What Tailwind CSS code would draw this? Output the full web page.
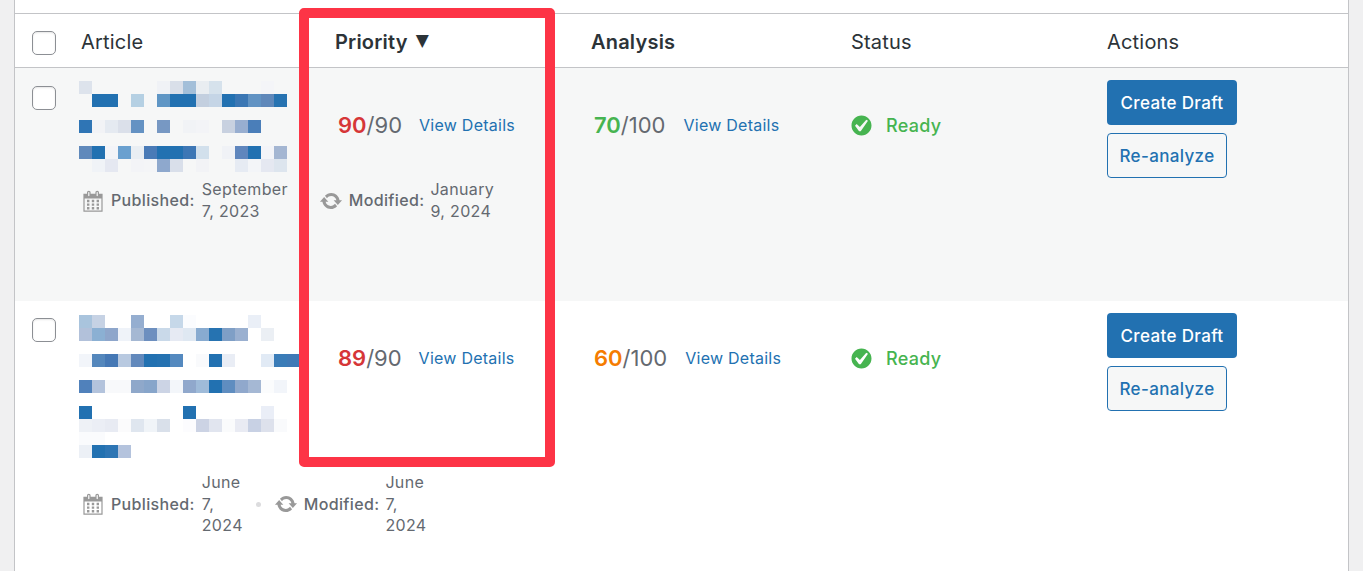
<!DOCTYPE html>
<html>
<head>
    <title>Content Refresh</title>
    <script src="https://cdn.jsdelivr.net/npm/@tailwindcss/browser@4"></script>
</head>
<body class="bg-[#f0f0f1] font-['Inter',sans-serif] text-[#2c3338]">
    <div class="relative h-[571px] overflow-hidden px-[14px]">
        <div class="h-full border-x border-[#c3c4c7] bg-white">
            <div class="h-[13px]"></div>

            <!-- Table header -->
            <div class="grid h-[55px] grid-cols-[51px_254px_256px_260px_256px_1fr] items-center border-y border-[#c3c4c7] pt-[2px] text-[20px] tracking-[0.2px]">
                <div class="pl-[17px] pt-[2px]">
                    <div class="h-[24px] w-[24px] rounded-[5px] border border-[#8c8f94] bg-white shadow-[inset_0_1px_2px_rgba(0,0,0,0.1)]"></div>
                </div>
                <div class="pl-[15px]">Article</div>
                <div class="flex items-center pl-[15px] font-semibold">Priority <span class="ml-[8px] -mt-[2px] font-['DejaVu_Sans',sans-serif] text-[17px]">▼</span></div>
                <div class="pl-[15px] font-semibold">Analysis</div>
                <div class="pl-[15px]">Status</div>
                <div class="pl-[15px]">Actions</div>
            </div>

            <!-- Row 1 -->
            <div class="grid h-[233px] grid-cols-[51px_254px_256px_260px_256px_1fr] bg-[#f6f7f7]">
                <div class="pl-[17px] pt-[18px]">
                    <div class="h-[24px] w-[24px] rounded-[5px] border border-[#8c8f94] bg-white shadow-[inset_0_1px_2px_rgba(0,0,0,0.1)]"></div>
                </div>
                <div class="min-w-0 pl-[15px] pt-[13px]">
                    <svg class="-ml-[2px] block" width="208" height="91" viewBox="0 0 208 91" shape-rendering="crispEdges">
                        <rect x="0" y="0" width="13" height="13" fill="#dde3ec"/><rect x="78" y="0" width="13" height="13" fill="#f0f2f6"/><rect x="91" y="0" width="13" height="13" fill="#d9dfe9"/><rect x="104" y="0" width="13" height="13" fill="#a3bfd9"/><rect x="117" y="0" width="13" height="13" fill="#e9edf1"/><rect x="130" y="0" width="13" height="13" fill="#d6e2ec"/><rect x="182" y="0" width="13" height="13" fill="#f4f5f8"/>
                        <rect x="13" y="13" width="26" height="13" fill="#2271b1"/><rect x="52" y="13" width="13" height="13" fill="#b5d0e3"/><rect x="78" y="13" width="13" height="13" fill="#5f96c5"/><rect x="91" y="13" width="26" height="13" fill="#2271b1"/><rect x="117" y="13" width="13" height="13" fill="#c3cfdf"/><rect x="130" y="13" width="13" height="13" fill="#c5d5e6"/><rect x="143" y="13" width="13" height="13" fill="#2271b1"/><rect x="156" y="13" width="13" height="13" fill="#3b77b4"/><rect x="169" y="13" width="13" height="13" fill="#6193c3"/><rect x="182" y="13" width="13" height="13" fill="#5f88ba"/><rect x="195" y="13" width="13" height="13" fill="#2773b1"/>
                        <rect x="0" y="39" width="13" height="13" fill="#2f75b5"/><rect x="13" y="39" width="13" height="13" fill="#f2f3f6"/><rect x="26" y="39" width="13" height="13" fill="#e5eaf1"/><rect x="39" y="39" width="13" height="13" fill="#dbe0ea"/><rect x="52" y="39" width="13" height="13" fill="#6492c3"/><rect x="78" y="39" width="13" height="13" fill="#7798c3"/><rect x="104" y="39" width="13" height="13" fill="#f1f3f6"/><rect x="117" y="39" width="13" height="13" fill="#f3f4f7"/><rect x="143" y="39" width="13" height="13" fill="#c8d1e0"/><rect x="156" y="39" width="13" height="13" fill="#98aed0"/><rect x="169" y="39" width="13" height="13" fill="#4a7eb9"/>
                        <rect x="0" y="65" width="13" height="13" fill="#6089bb"/><rect x="13" y="65" width="13" height="13" fill="#2271b1"/><rect x="26" y="65" width="13" height="13" fill="#f3f4f8"/><rect x="39" y="65" width="13" height="13" fill="#6aa0cf"/><rect x="52" y="65" width="13" height="13" fill="#e9eef3"/><rect x="65" y="65" width="13" height="13" fill="#4a7bb7"/><rect x="78" y="65" width="26" height="13" fill="#2271b1"/><rect x="104" y="65" width="13" height="13" fill="#3d77b5"/><rect x="117" y="65" width="13" height="13" fill="#d2e0ec"/><rect x="143" y="65" width="13" height="13" fill="#f0f2f6"/><rect x="156" y="65" width="13" height="13" fill="#5f86bd"/><rect x="169" y="65" width="13" height="13" fill="#2271b1"/><rect x="182" y="65" width="13" height="13" fill="#f3f4f8"/><rect x="195" y="65" width="13" height="13" fill="#a4b6d2"/>
                        <rect x="13" y="78" width="13" height="13" fill="#f0f3f7"/><rect x="26" y="78" width="13" height="13" fill="#e5e8f1"/><rect x="52" y="78" width="13" height="13" fill="#f3f4f7"/><rect x="65" y="78" width="13" height="13" fill="#f4f5f7"/><rect x="78" y="78" width="13" height="13" fill="#8ea8cd"/><rect x="91" y="78" width="13" height="13" fill="#d9dfea"/><rect x="117" y="78" width="13" height="13" fill="#f2f3f6"/><rect x="156" y="78" width="13" height="13" fill="#e6ebf3"/><rect x="169" y="78" width="13" height="13" fill="#f3f5f8"/><rect x="182" y="78" width="13" height="13" fill="#e5e8f1"/><rect x="195" y="78" width="13" height="13" fill="#dde5ee"/>
                    </svg>
                    <div class="mt-[7px] flex w-max items-center text-[16px] leading-[21.5px] tracking-[0.35px] text-[#646970]">
                        <svg class="h-[24px] w-[24px] fill-[#999]" viewBox="0 0 20 20"><path d="M15 4h3v15H2V4h3V3c0-.41.15-.76.44-1.06.29-.29.65-.44 1.06-.44s.77.15 1.06.44c.29.3.44.65.44 1.06v1h4V3c0-.41.15-.76.44-1.06.29-.29.65-.44 1.06-.44s.77.15 1.06.44c.29.3.44.65.44 1.06v1zM6 3v2.5c0 .14.05.26.15.36.09.09.21.14.35.14s.26-.05.36-.14c.09-.1.14-.22.14-.36V3c0-.14-.05-.26-.14-.35-.1-.1-.22-.15-.36-.15s-.26.05-.35.15c-.1.09-.15.21-.15.35zm7 0v2.5c0 .14.05.26.14.36.1.09.22.14.36.14s.26-.05.36-.14c.09-.1.14-.22.14-.36V3c0-.14-.05-.26-.14-.35-.1-.1-.22-.15-.36-.15s-.26.05-.36.15c-.09.09-.14.21-.14.35zm4 15V8H3v10h14zM7 9v2H5V9h2zm2 0h2v2H9V9zm4 2V9h2v2h-2zm-6 1v2H5v-2h2zm2 0h2v2H9v-2zm4 2v-2h2v2h-2zm-6 1v2H5v-2h2zm4 2H9v-2h2v2zm4 0h-2v-2h2v2z"/></svg>
                        <span class="ml-[6px] font-medium">Published:</span>
                        <span class="ml-[7px] w-[86px]">September 7, 2023</span>
                        <span class="ml-[13px] h-[5px] w-[5px] rounded-full bg-[#dcdcde]"></span>
                        <svg class="ml-[13px] h-[24px] w-[24px] fill-[#999]" viewBox="0 0 20 20"><path d="M10.2 3.28c3.53 0 6.43 2.61 6.92 6h2.08l-3.5 4-3.5-4h2.32c-.45-1.97-2.21-3.45-4.32-3.45-1.45 0-2.73.71-3.54 1.78L4.95 5.66C6.23 4.2 8.11 3.28 10.2 3.28zm-.4 13.44c-3.52 0-6.43-2.61-6.92-6H.8l3.5-4c1.17 1.33 2.33 2.67 3.5 4H5.48c.45 1.97 2.21 3.45 4.32 3.45 1.45 0 2.73-.71 3.54-1.78l1.71 1.95c-1.28 1.46-3.15 2.38-5.25 2.38z"/></svg>
                        <span class="ml-[6px] font-medium">Modified:</span>
                        <span class="ml-[6px] w-[72px]">January 9, 2024</span>
                    </div>
                </div>
                <div class="pl-[18px] pt-[42px]">
                    <div class="flex h-[30px] items-center gap-[17px]">
                        <span class="text-[22px] text-[#646970]"><b class="font-semibold text-[#d63638]">90</b>/90</span>
                        <a href="#" class="text-[16px] tracking-[0.25px] text-[#2271b1]">View Details</a>
                    </div>
                </div>
                <div class="pl-[18px] pt-[42px]">
                    <div class="flex h-[30px] items-center gap-[18px]">
                        <span class="text-[22px] text-[#646970]"><b class="font-semibold text-[#46b450]">70</b>/100</span>
                        <a href="#" class="text-[16px] tracking-[0.25px] text-[#2271b1]">View Details</a>
                    </div>
                </div>
                <div class="pl-[13px] pt-[42px]">
                    <div class="flex h-[30px] items-center gap-[12px] text-[18px] font-medium tracking-[0.3px] text-[#46b450]">
                        <svg class="h-[25px] w-[25px] fill-[#46b450]" viewBox="0 0 20 20"><path d="M10 2c-4.42 0-8 3.58-8 8s3.58 8 8 8 8-3.58 8-8-3.58-8-8-8zm-.615 12.66h-1.34l-3.24-4.54 1.341-1.25 2.569 2.4 5.141-5.931 1.34.94-5.811 8.381z"/></svg>
                        Ready
                    </div>
                </div>
                <div class="flex flex-col items-start gap-[8px] pl-[15px] pt-[12px] text-[17px] font-medium tracking-[0.35px]">
                    <button class="flex h-[45px] w-[130px] items-center justify-center rounded-[4px] bg-[#2271b1] pt-[3px] text-white">Create Draft</button>
                    <button class="flex h-[45px] w-[120px] items-center justify-center rounded-[4px] border border-[#2271b1] bg-[#f6f7f7] pt-[2px] text-[#2271b1]">Re-analyze</button>
                </div>
            </div>

            <!-- Row 2 -->
            <div class="grid h-[270px] grid-cols-[51px_254px_256px_260px_256px_1fr] bg-white">
                <div class="pl-[17px] pt-[17px]">
                    <div class="h-[24px] w-[24px] rounded-[5px] border border-[#8c8f94] bg-white shadow-[inset_0_1px_2px_rgba(0,0,0,0.1)]"></div>
                </div>
                <div class="min-w-0 pl-[15px] pt-[14px]">
                    <svg class="-ml-[2px] block overflow-visible" width="221" height="143" viewBox="0 0 221 143" shape-rendering="crispEdges">
                        <rect x="0" y="0" width="13" height="13" fill="#a9c4dd"/><rect x="13" y="0" width="13" height="13" fill="#c6d2e4"/><rect x="52" y="0" width="13" height="13" fill="#95aed0"/><rect x="91" y="0" width="13" height="13" fill="#c6d8e9"/><rect x="104" y="0" width="13" height="13" fill="#fbfcfe"/><rect x="169" y="0" width="13" height="13" fill="#eaeff7"/>
                        <rect x="0" y="13" width="13" height="13" fill="#b2c1da"/><rect x="13" y="13" width="13" height="13" fill="#8bb0d3"/><rect x="26" y="13" width="13" height="13" fill="#8ea6cb"/><rect x="39" y="13" width="13" height="13" fill="#eff3f9"/><rect x="52" y="13" width="13" height="13" fill="#a5b8d3"/><rect x="65" y="13" width="13" height="13" fill="#6d8fbf"/><rect x="78" y="13" width="13" height="13" fill="#c9d9e9"/><rect x="91" y="13" width="13" height="13" fill="#e6eaf3"/><rect x="104" y="13" width="13" height="13" fill="#dfe8f2"/><rect x="117" y="13" width="13" height="13" fill="#88abd0"/><rect x="130" y="13" width="13" height="13" fill="#2673b1"/><rect x="143" y="13" width="13" height="13" fill="#7f9fc6"/><rect x="156" y="13" width="13" height="13" fill="#9ab0d0"/><rect x="182" y="13" width="13" height="13" fill="#ebeff4"/>
                        <rect x="0" y="39" width="13" height="13" fill="#f2f5fa"/><rect x="13" y="39" width="13" height="13" fill="#5487bc"/><rect x="26" y="39" width="13" height="13" fill="#4578b5"/><rect x="39" y="39" width="13" height="13" fill="#b8c9e0"/><rect x="52" y="39" width="13" height="13" fill="#6289bc"/><rect x="65" y="39" width="13" height="13" fill="#2271b1"/><rect x="78" y="39" width="13" height="13" fill="#2572b1"/><rect x="91" y="39" width="13" height="13" fill="#5489bf"/><rect x="117" y="39" width="13" height="13" fill="#f9fafc"/><rect x="130" y="39" width="13" height="13" fill="#2271b1"/><rect x="143" y="39" width="13" height="13" fill="#e9edf5"/><rect x="182" y="39" width="13" height="13" fill="#e1eaf5"/><rect x="195" y="39" width="13" height="13" fill="#3a7cb8"/><rect x="208" y="39" width="13" height="13" fill="#3f79b6"/>
                        <rect x="0" y="65" width="13" height="13" fill="#5081bb"/><rect x="13" y="65" width="13" height="13" fill="#b3c3dc"/><rect x="26" y="65" width="26" height="13" fill="#f8f9fb"/><rect x="52" y="65" width="13" height="13" fill="#8fa8ca"/><rect x="65" y="65" width="13" height="13" fill="#87a5ca"/><rect x="78" y="65" width="13" height="13" fill="#ccd4e5"/><rect x="91" y="65" width="13" height="13" fill="#f3f6fa"/><rect x="104" y="65" width="13" height="13" fill="#90a8cc"/><rect x="117" y="65" width="13" height="13" fill="#9fbbd9"/><rect x="130" y="65" width="13" height="13" fill="#2271b1"/><rect x="143" y="65" width="13" height="13" fill="#5f8dc0"/><rect x="156" y="65" width="13" height="13" fill="#90a8cc"/><rect x="169" y="65" width="13" height="13" fill="#a5b8d4"/><rect x="182" y="65" width="13" height="13" fill="#fbfcfd"/><rect x="195" y="65" width="13" height="13" fill="#f2f5fa"/>
                        <rect x="0" y="91" width="13" height="13" fill="#2271b1"/><rect x="104" y="91" width="13" height="13" fill="#2271b1"/><rect x="182" y="91" width="13" height="13" fill="#eaeef7"/>
                        <rect x="0" y="104" width="13" height="13" fill="#eef1f6"/><rect x="13" y="104" width="13" height="13" fill="#ebeef5"/><rect x="26" y="104" width="13" height="13" fill="#e8ebf3"/><rect x="39" y="104" width="13" height="13" fill="#fbfbfc"/><rect x="52" y="104" width="13" height="13" fill="#dfe6ef"/><rect x="65" y="104" width="13" height="13" fill="#f0f4f8"/><rect x="78" y="104" width="13" height="13" fill="#d9e0ea"/><rect x="104" y="104" width="13" height="13" fill="#fcfcfe"/><rect x="117" y="104" width="13" height="13" fill="#ccd3e4"/><rect x="130" y="104" width="13" height="13" fill="#e1e5ef"/><rect x="143" y="104" width="13" height="13" fill="#fafbfc"/><rect x="156" y="104" width="13" height="13" fill="#e9ebf3"/><rect x="169" y="104" width="13" height="13" fill="#c8d1e4"/><rect x="182" y="104" width="13" height="13" fill="#dde1ec"/><rect x="195" y="104" width="13" height="13" fill="#f9fafc"/>
                        <rect x="0" y="117" width="26" height="13" fill="#fafbfd"/>
                        <rect x="0" y="130" width="13" height="13" fill="#ecf0f6"/><rect x="13" y="130" width="13" height="13" fill="#2271b1"/><rect x="26" y="130" width="13" height="13" fill="#2d75b4"/><rect x="39" y="130" width="13" height="13" fill="#b4c3dd"/>
                    </svg>
                    <div class="mt-[14px] flex w-max items-center text-[16px] leading-[21.5px] tracking-[0.35px] text-[#646970]">
                        <svg class="h-[24px] w-[24px] fill-[#999]" viewBox="0 0 20 20"><path d="M15 4h3v15H2V4h3V3c0-.41.15-.76.44-1.06.29-.29.65-.44 1.06-.44s.77.15 1.06.44c.29.3.44.65.44 1.06v1h4V3c0-.41.15-.76.44-1.06.29-.29.65-.44 1.06-.44s.77.15 1.06.44c.29.3.44.65.44 1.06v1zM6 3v2.5c0 .14.05.26.15.36.09.09.21.14.35.14s.26-.05.36-.14c.09-.1.14-.22.14-.36V3c0-.14-.05-.26-.14-.35-.1-.1-.22-.15-.36-.15s-.26.05-.35.15c-.1.09-.15.21-.15.35zm7 0v2.5c0 .14.05.26.14.36.1.09.22.14.36.14s.26-.05.36-.14c.09-.1.14-.22.14-.36V3c0-.14-.05-.26-.14-.35-.1-.1-.22-.15-.36-.15s-.26.05-.36.15c-.09.09-.14.21-.14.35zm4 15V8H3v10h14zM7 9v2H5V9h2zm2 0h2v2H9V9zm4 2V9h2v2h-2zm-6 1v2H5v-2h2zm2 0h2v2H9v-2zm4 2v-2h2v2h-2zm-6 1v2H5v-2h2zm4 2H9v-2h2v2zm4 0h-2v-2h2v2z"/></svg>
                        <span class="ml-[6px] font-medium">Published:</span>
                        <span class="ml-[7px] w-[41px]">June 7, 2024</span>
                        <span class="ml-[13px] h-[5px] w-[5px] rounded-full bg-[#dcdcde]"></span>
                        <svg class="ml-[13px] h-[24px] w-[24px] fill-[#999]" viewBox="0 0 20 20"><path d="M10.2 3.28c3.53 0 6.43 2.61 6.92 6h2.08l-3.5 4-3.5-4h2.32c-.45-1.97-2.21-3.45-4.32-3.45-1.45 0-2.73.71-3.54 1.78L4.95 5.66C6.23 4.2 8.11 3.28 10.2 3.28zm-.4 13.44c-3.52 0-6.43-2.61-6.92-6H.8l3.5-4c1.17 1.33 2.33 2.67 3.5 4H5.48c.45 1.97 2.21 3.45 4.32 3.45 1.45 0 2.73-.71 3.54-1.78l1.71 1.95c-1.28 1.46-3.15 2.38-5.25 2.38z"/></svg>
                        <span class="ml-[6px] font-medium">Modified:</span>
                        <span class="ml-[6px] w-[41px]">June 7, 2024</span>
                    </div>
                </div>
                <div class="pl-[18px] pt-[42px]">
                    <div class="flex h-[30px] items-center gap-[17px]">
                        <span class="text-[22px] text-[#646970]"><b class="font-semibold text-[#d63638]">89</b>/90</span>
                        <a href="#" class="text-[16px] tracking-[0.25px] text-[#2271b1]">View Details</a>
                    </div>
                </div>
                <div class="pl-[18px] pt-[42px]">
                    <div class="flex h-[30px] items-center gap-[18px]">
                        <span class="text-[22px] text-[#646970]"><b class="font-semibold text-[#f57c00]">60</b>/100</span>
                        <a href="#" class="text-[16px] tracking-[0.25px] text-[#2271b1]">View Details</a>
                    </div>
                </div>
                <div class="pl-[13px] pt-[42px]">
                    <div class="flex h-[30px] items-center gap-[12px] text-[18px] font-medium tracking-[0.3px] text-[#46b450]">
                        <svg class="h-[25px] w-[25px] fill-[#46b450]" viewBox="0 0 20 20"><path d="M10 2c-4.42 0-8 3.58-8 8s3.58 8 8 8 8-3.58 8-8-3.58-8-8-8zm-.615 12.66h-1.34l-3.24-4.54 1.341-1.25 2.569 2.4 5.141-5.931 1.34.94-5.811 8.381z"/></svg>
                        Ready
                    </div>
                </div>
                <div class="flex flex-col items-start gap-[8px] pl-[15px] pt-[12px] text-[17px] font-medium tracking-[0.35px]">
                    <button class="flex h-[45px] w-[130px] items-center justify-center rounded-[4px] bg-[#2271b1] pt-[3px] text-white">Create Draft</button>
                    <button class="flex h-[45px] w-[120px] items-center justify-center rounded-[4px] border border-[#2271b1] bg-[#f6f7f7] pt-[2px] text-[#2271b1]">Re-analyze</button>
                </div>
            </div>
        </div>

        <!-- Highlight frame over the Priority column -->
        <div class="absolute left-[299px] top-[8px] h-[459px] w-[256px] rounded-[5px] border-[10px] border-[#fd3446]"></div>
    </div>
</body>
</html>
